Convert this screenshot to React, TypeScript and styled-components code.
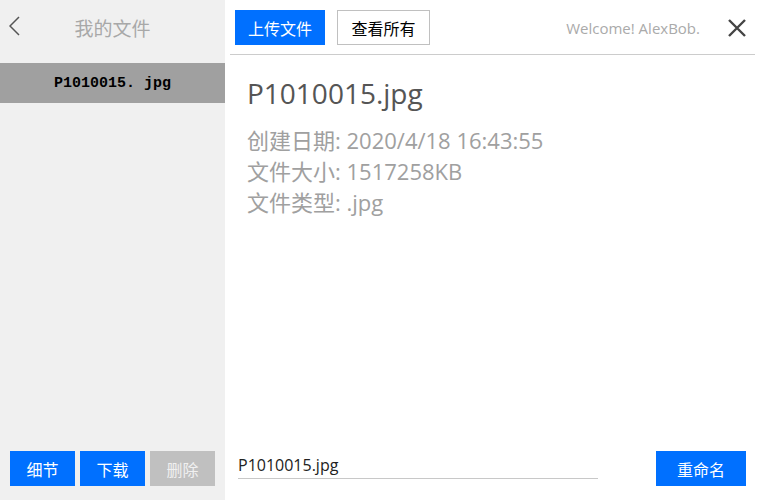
import React, { useState } from 'react';
import styled, { createGlobalStyle } from 'styled-components';

const GlobalStyle = createGlobalStyle`
  html, body {
    margin: 0;
    padding: 0;
  }
  body {
    font-family: "Open Sans", "Noto Sans CJK SC", sans-serif;
  }
  * {
    box-sizing: border-box;
  }
`;

const file = {
  name: 'P1010015.jpg',
  created: '2020/4/18 16:43:55',
  size: '1517258KB',
  type: '.jpg',
};

const App = () => {
  const [name, setName] = useState(file.name);

  return (
    <>
      <GlobalStyle />
      <Layout>
        <Sidebar>
          <SideHeader>
            <BackButton aria-label='back'>
              <svg width='12' height='20' viewBox='0 0 12 20'>
                <polyline points='10,1 1,10 10,19' fill='none' stroke='#555' strokeWidth='1.5' />
              </svg>
            </BackButton>
            <SideTitle>我的文件</SideTitle>
          </SideHeader>
          <FileList>
            <FileItem selected>P1010015. jpg</FileItem>
          </FileList>
          <SideActions>
            <ActionButton>细节</ActionButton>
            <ActionButton>下载</ActionButton>
            <ActionButton disabled>删除</ActionButton>
          </SideActions>
        </Sidebar>

        <Main>
          <Toolbar>
            <ActionButton wide>上传文件</ActionButton>
            <OutlineButton>查看所有</OutlineButton>
            <Welcome>Welcome! AlexBob.</Welcome>
            <CloseButton aria-label='close'>
              <svg width='18' height='18' viewBox='0 0 18 18'>
                <path d='M1 1L17 17M17 1L1 17' stroke='#444' strokeWidth='2.4' />
              </svg>
            </CloseButton>
          </Toolbar>
          <Divider />
          <Details>
            <FileName>{file.name}</FileName>
            <InfoLine>创建日期: {file.created}</InfoLine>
            <InfoLine>文件大小: {file.size}</InfoLine>
            <InfoLine>文件类型: {file.type}</InfoLine>
          </Details>
          <RenameBar>
            <NameInput value={name} onChange={(e) => setName(e.target.value)} />
            <ActionButton wide>重命名</ActionButton>
          </RenameBar>
        </Main>
      </Layout>
    </>
  );
};

export default App;

const Layout = styled.div`
  display: flex;
  width: 760px;
  height: 500px;
  overflow: hidden;
`;

const Sidebar = styled.aside`
  display: flex;
  flex-direction: column;
  width: 225px;
  background-color: #f0f0f0;
`;

const SideHeader = styled.div`
  position: relative;
  display: flex;
  align-items: center;
  justify-content: center;
  height: 63px;
  padding-bottom: 8px;
`;

const BackButton = styled.button`
  position: absolute;
  left: 9px;
  top: 16px;
  display: flex;
  padding: 0;
  border: none;
  background: none;
  cursor: pointer;
`;

const SideTitle = styled.h2`
  margin: 0;
  font-size: 19px;
  font-weight: 400;
  color: #a8a8a8;
`;

const FileList = styled.ul`
  flex: 1;
  margin: 0;
  padding: 0;
  list-style: none;
`;

const FileItem = styled.li<{ selected?: boolean }>`
  display: flex;
  align-items: center;
  justify-content: center;
  height: 40px;
  background-color: ${(p) => (p.selected ? '#a0a0a0' : 'transparent')};
  font-family: "Liberation Mono", "Noto Sans CJK SC", monospace;
  font-size: 15px;
  font-weight: 700;
  color: #000;
`;

const SideActions = styled.div`
  display: flex;
  gap: 5px;
  padding: 0 10px 14px;
`;

const ActionButton = styled.button<{ wide?: boolean }>`
  width: ${(p) => (p.wide ? '90px' : '65px')};
  height: 35px;
  padding: 0;
  border: none;
  background-color: #0070ff;
  color: #fff;
  font-family: "Open Sans", "Noto Sans CJK SC", sans-serif;
  font-size: 16px;
  cursor: pointer;

  &:disabled {
    background-color: #c0c0c0;
    color: #f0f0f0;
    cursor: default;
  }
`;

const Main = styled.main`
  display: flex;
  flex-direction: column;
  flex: 1;
  padding: 10px 5px 14px;
  background-color: #fff;
`;

const Toolbar = styled.div`
  display: flex;
  align-items: center;
  gap: 12px;
  height: 35px;
  padding: 0 9px 0 5px;
`;

const OutlineButton = styled.button`
  width: 93px;
  height: 35px;
  padding: 0;
  border: 1px solid #c0c0c0;
  background-color: #fff;
  color: #000;
  font-family: "Open Sans", "Noto Sans CJK SC", sans-serif;
  font-size: 16px;
  cursor: pointer;
`;

const Welcome = styled.span`
  margin-left: auto;
  margin-right: 16px;
  font-size: 15px;
  color: #aaaaaa;
`;

const CloseButton = styled.button`
  display: flex;
  padding: 0;
  border: none;
  background: none;
  cursor: pointer;
`;

const Divider = styled.hr`
  margin: 9px 0 0;
  border: none;
  border-top: 1px solid #cccccc;
`;

const Details = styled.section`
  flex: 1;
  padding: 19px 17px 0;
`;

const FileName = styled.h1`
  margin: 0 0 13px;
  font-size: 28px;
  font-weight: 400;
  color: #555;
`;

const InfoLine = styled.p`
  margin: 0;
  font-size: 22px;
  line-height: 31px;
  color: #a0a0a0;
`;

const RenameBar = styled.div`
  display: flex;
  align-items: center;
  justify-content: space-between;
  padding: 0 9px 0 8px;
`;

const NameInput = styled.input`
  width: 360px;
  height: 28px;
  margin-bottom: 7px;
  padding: 0;
  border: none;
  border-bottom: 1px solid #c8c8c8;
  outline: none;
  font-family: "Open Sans", "Noto Sans CJK SC", sans-serif;
  font-size: 16px;
  color: #222;
`;
